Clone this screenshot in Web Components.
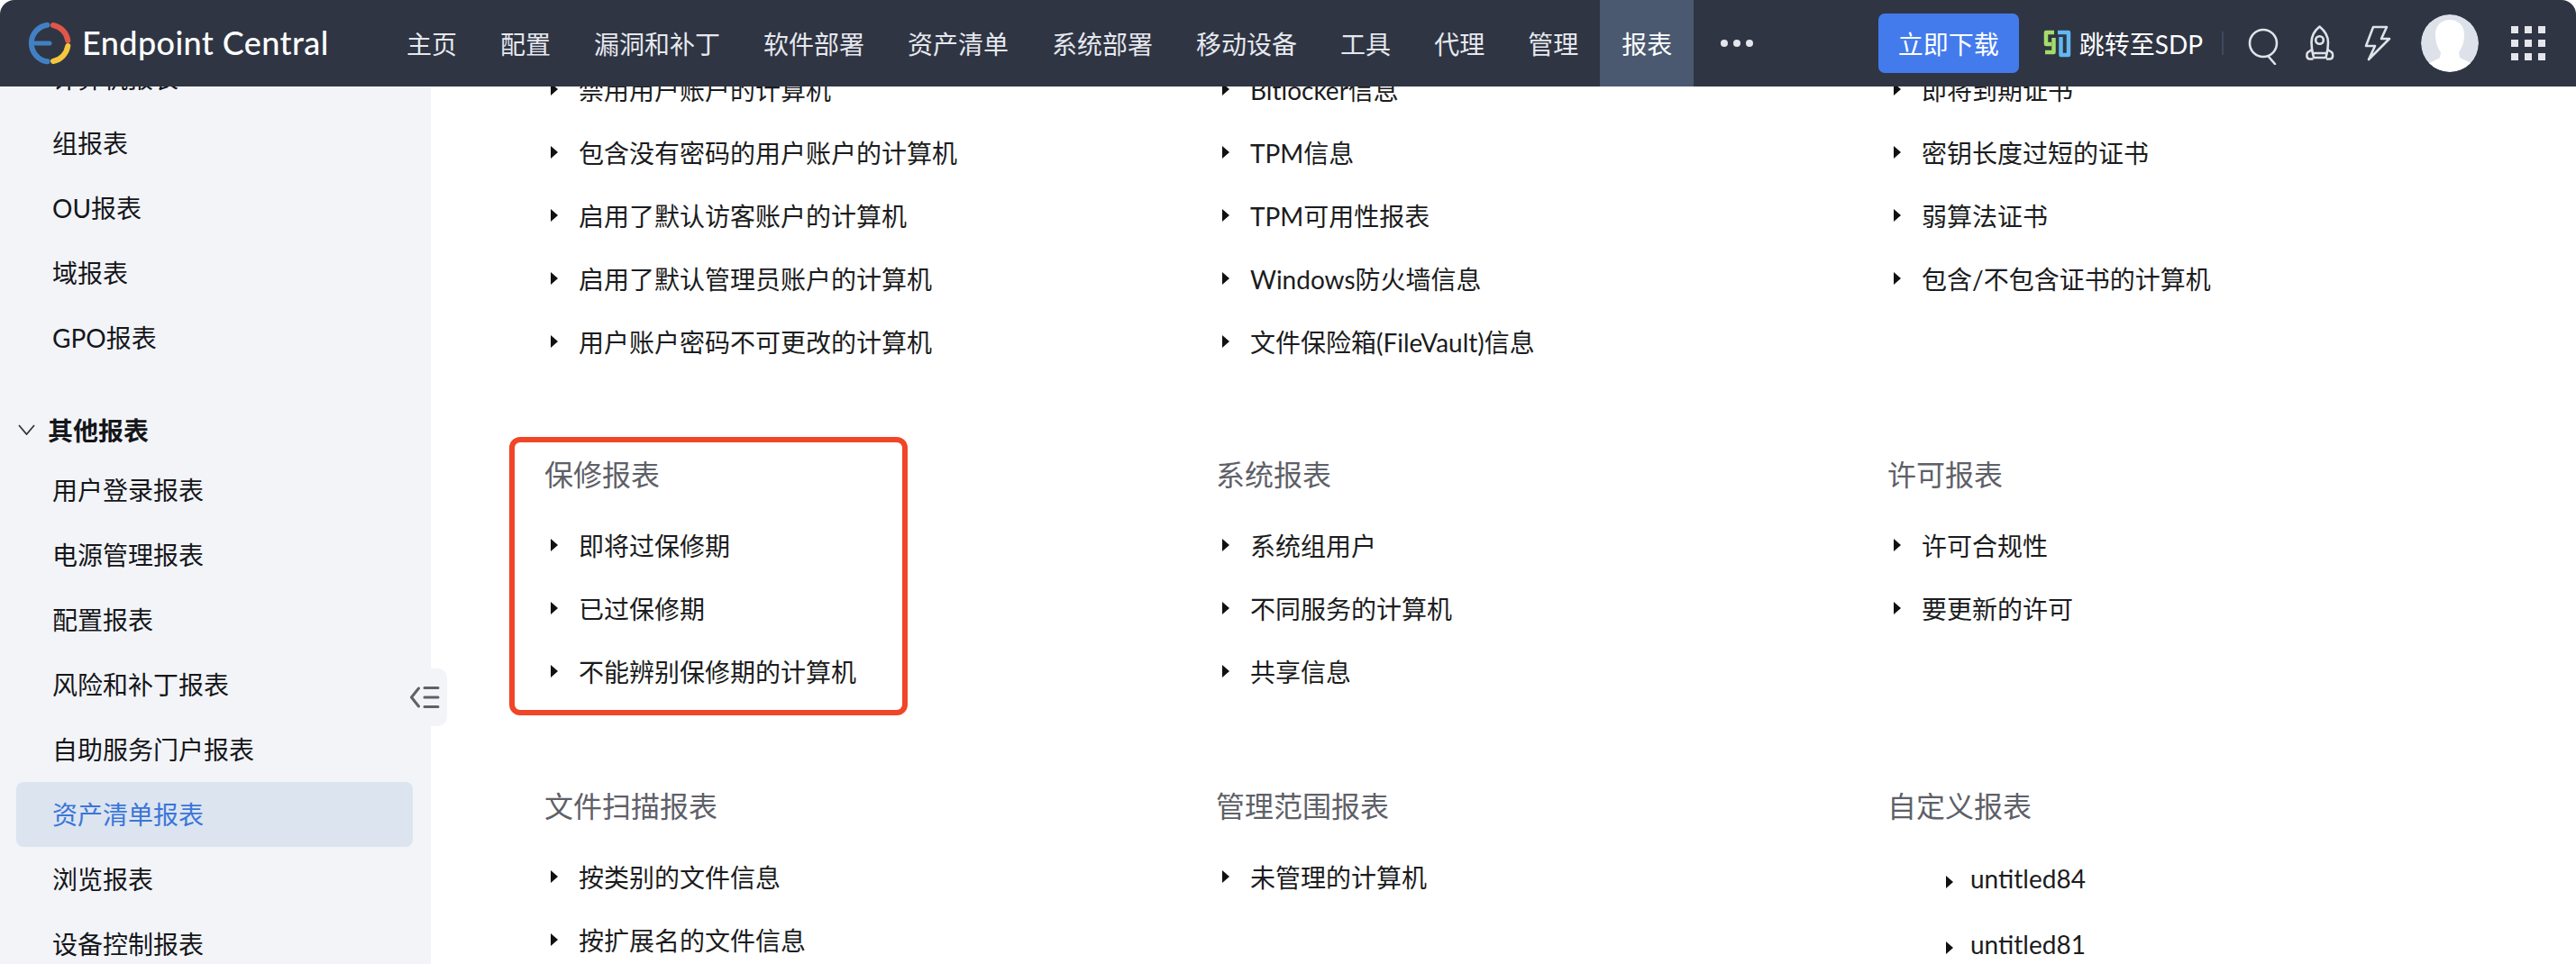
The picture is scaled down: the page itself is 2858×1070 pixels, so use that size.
<!DOCTYPE html>
<html lang="zh">
<head>
<meta charset="utf-8">
<title>Endpoint Central</title>
<style>
  html, body { margin: 0; height: 100%; background: #fff; overflow: hidden; }
  body { font-family: Lato, "Noto Sans CJK SC", sans-serif; font-size: 28px; }
</style>
</head>
<body>
<ec-app>
  <ec-header slot="header">
    <ec-nav-item>主页</ec-nav-item>
    <ec-nav-item>配置</ec-nav-item>
    <ec-nav-item>漏洞和补丁</ec-nav-item>
    <ec-nav-item>软件部署</ec-nav-item>
    <ec-nav-item>资产清单</ec-nav-item>
    <ec-nav-item>系统部署</ec-nav-item>
    <ec-nav-item>移动设备</ec-nav-item>
    <ec-nav-item>工具</ec-nav-item>
    <ec-nav-item>代理</ec-nav-item>
    <ec-nav-item>管理</ec-nav-item>
    <ec-nav-item active>报表</ec-nav-item>
  </ec-header>

  <ec-sidebar slot="sidebar">
    <ec-side-item>计算机报表</ec-side-item>
    <ec-side-item>组报表</ec-side-item>
    <ec-side-item>OU报表</ec-side-item>
    <ec-side-item>域报表</ec-side-item>
    <ec-side-item>GPO报表</ec-side-item>
    <ec-side-group>其他报表</ec-side-group>
    <ec-side-item>用户登录报表</ec-side-item>
    <ec-side-item>电源管理报表</ec-side-item>
    <ec-side-item>配置报表</ec-side-item>
    <ec-side-item>风险和补丁报表</ec-side-item>
    <ec-side-item>自助服务门户报表</ec-side-item>
    <ec-side-item active>资产清单报表</ec-side-item>
    <ec-side-item>浏览报表</ec-side-item>
    <ec-side-item>设备控制报表</ec-side-item>
  </ec-sidebar>

  <ec-report-grid slot="main">
    <ec-report-section>
      <ec-report-link>禁用用户账户的计算机</ec-report-link>
      <ec-report-link>包含没有密码的用户账户的计算机</ec-report-link>
      <ec-report-link>启用了默认访客账户的计算机</ec-report-link>
      <ec-report-link>启用了默认管理员账户的计算机</ec-report-link>
      <ec-report-link>用户账户密码不可更改的计算机</ec-report-link>
    </ec-report-section>
    <ec-report-section>
      <ec-report-link>Bitlocker信息</ec-report-link>
      <ec-report-link>TPM信息</ec-report-link>
      <ec-report-link>TPM可用性报表</ec-report-link>
      <ec-report-link>Windows防火墙信息</ec-report-link>
      <ec-report-link>文件保险箱(FileVault)信息</ec-report-link>
    </ec-report-section>
    <ec-report-section>
      <ec-report-link>即将到期证书</ec-report-link>
      <ec-report-link>密钥长度过短的证书</ec-report-link>
      <ec-report-link>弱算法证书</ec-report-link>
      <ec-report-link>包含/不包含证书的计算机</ec-report-link>
    </ec-report-section>

    <ec-report-section heading="保修报表" marked>
      <ec-report-link>即将过保修期</ec-report-link>
      <ec-report-link>已过保修期</ec-report-link>
      <ec-report-link>不能辨别保修期的计算机</ec-report-link>
    </ec-report-section>
    <ec-report-section heading="系统报表">
      <ec-report-link>系统组用户</ec-report-link>
      <ec-report-link>不同服务的计算机</ec-report-link>
      <ec-report-link>共享信息</ec-report-link>
    </ec-report-section>
    <ec-report-section heading="许可报表">
      <ec-report-link>许可合规性</ec-report-link>
      <ec-report-link>要更新的许可</ec-report-link>
    </ec-report-section>

    <ec-report-section heading="文件扫描报表">
      <ec-report-link>按类别的文件信息</ec-report-link>
      <ec-report-link>按扩展名的文件信息</ec-report-link>
    </ec-report-section>
    <ec-report-section heading="管理范围报表">
      <ec-report-link>未管理的计算机</ec-report-link>
    </ec-report-section>
    <ec-report-section heading="自定义报表">
      <ec-report-link nested>untitled84</ec-report-link>
      <ec-report-link nested>untitled81</ec-report-link>
    </ec-report-section>
  </ec-report-grid>
</ec-app>

<script>
// shadow root helper, every element below uses it
function shadow(el, html) {
  el.attachShadow({ mode: 'open' }).innerHTML = html;
}

class EcApp extends HTMLElement {
  connectedCallback() {
    shadow(this, `
      <style>
        :host { display: flex; flex-direction: column; height: 100vh; }
        .body { position: relative; flex: 1; min-height: 0; display: flex; overflow: hidden; }
        .toggle {
          position: absolute; left: 450px; top: 646px; width: 46px; height: 64px;
          background: #f2f4f8; border-radius: 0 10px 10px 0;
        }
        .toggle svg { display: block; }
      </style>
      <slot name="header"></slot>
      <div class="body">
        <slot name="sidebar"></slot>
        <slot name="main"></slot>
        <div class="toggle">
          <svg width="46" height="64" viewBox="0 0 46 64" fill="none" stroke="#5f6168" stroke-width="3" stroke-linecap="round" stroke-linejoin="round">
            <path d="M14.500 22L6.500 32L14.500 42"/>
            <path d="M21 21.500H36M21 32H36M21 42.500H36"/>
          </svg>
        </div>
      </div>`);
  }
}

class EcHeader extends HTMLElement {
  connectedCallback() {
    shadow(this, `
      <style>
        :host {
          display: flex; align-items: stretch; flex: none; height: 96px;
          background: #2f3543; border-radius: 16px 16px 0 0; color: #fff;
        }
        .brand { display: flex; align-items: center; width: 427px; flex: none; }
        .brand svg { margin-left: 28px; flex: none; }
        .brand span { margin: 0 0 2px 9px; font-size: 36px; font-weight: 500; white-space: nowrap; letter-spacing: .4px; }
        nav { display: flex; align-items: stretch; }
        .more { display: flex; align-items: center; gap: 6px; margin-left: 30px; }
        .more i { width: 8px; height: 8px; border-radius: 50%; background: #e4e6ec; }
        .tools { margin-left: auto; display: flex; align-items: center; padding-right: 34px; }
        .download {
          width: 156px; height: 66px; display: flex; align-items: center; justify-content: center;
          background: #437bed; border-radius: 7px; margin-right: 19px;
        }
        .sdp { display: flex; align-items: center; white-space: nowrap; }
        .sep { width: 2px; height: 26px; background: #3f4a5f; margin: 0 20px 0 21px; }
        svg { display: block; flex: none; }
        .rocket { margin-left: 21px; }
        .bolt { margin-left: 31px; }
        .avatar { margin-left: 33px; width: 64px; height: 64px; border-radius: 50%; }
        .apps {
          margin-left: 36px; display: grid; grid-template-columns: repeat(3, 8px);
          grid-auto-rows: 8px; gap: 7px;
        }
        .apps i { background: #e4e6ec; }
      </style>
      <div class="brand">
        <svg width="54" height="54" viewBox="27 21 54 54" fill="none" stroke-width="6" stroke-linecap="round">
          <path stroke="#4280c4" d="M51.500 27.700A20.500 20.500 0 0 0 51.500 68.300"/>
          <path stroke="#4280c4" stroke-width="5" d="M38 48H54"/>
          <path stroke="#e0574a" d="M58 28A20.500 20.500 0 0 1 74.300 45"/>
          <path stroke="#f6c63d" d="M74.300 51A20.500 20.500 0 0 1 58 68"/>
        </svg>
        <span>Endpoint Central</span>
      </div>
      <nav>
        <slot></slot>
        <div class="more"><i></i><i></i><i></i></div>
      </nav>
      <div class="tools">
        <div class="download">立即下载</div>
        <div class="sdp">
          <svg width="48" height="48" viewBox="0 0 48 48" fill="none" stroke-width="4.500" stroke-linejoin="round">
            <path stroke="#a4dc6a" d="M20 12H11V25H17"/>
            <path stroke="#a4dc6a" d="M19.500 18V34H10"/>
            <path stroke="#62b8f0" d="M24 12H36V37H27.500V17"/>
          </svg>
          <span>跳转至SDP</span>
        </div>
        <div class="sep"></div>
        <svg width="48" height="48" viewBox="0 0 48 48" fill="none" stroke="#dfe2e9" stroke-width="2.600" stroke-linecap="round">
          <circle cx="24" cy="24" r="15"/>
          <path d="M30 39L37 47"/>
        </svg>
        <svg class="rocket" width="36" height="44" viewBox="5 5 36 44" fill="none" stroke="#dfe2e9" stroke-width="2.600" stroke-linejoin="round">
          <path d="M22.500 8.500C17 13 13.500 19 13.500 26C13.500 31 14.500 38 16 43H29.500C31 38 32 31 32 26C32 19 28 13 22.500 8.500Z"/>
          <circle cx="22.500" cy="23.500" r="4.300"/>
          <path d="M15 33.500L9.500 37C7.500 39 8 44 11 44.500H15.500M30.500 33.500L36 37C38 39 37.500 44 34.500 44.500H30M15.500 38H30"/>
        </svg>
        <svg class="bolt" width="30" height="44" viewBox="73 6 30 44" fill="none" stroke="#dfe2e9" stroke-width="2.600" stroke-linejoin="round" stroke-linecap="round">
          <path d="M83 10H98L92 23H101L78 46L85 31H75Z"/>
        </svg>
        <svg class="avatar" viewBox="0 0 64 64">
          <circle cx="32" cy="32" r="32" fill="#dde1ea"/>
          <path fill="#fff" d="M32 6C41 6 48 12 48 22C48 32 45 38 42 42L43 48C47 50 52 52 55 54A32 32 0 0 1 9 54C13 52 18 50 21 48L22 42C19 38 16 32 16 22C16 12 23 6 32 6Z"/>
        </svg>
        <div class="apps"><i></i><i></i><i></i><i></i><i></i><i></i><i></i><i></i><i></i></div>
      </div>`);
  }
}

class EcNavItem extends HTMLElement {
  connectedCallback() {
    shadow(this, `
      <style>
        :host {
          display: inline-flex; align-items: center; height: 100%; padding: 0 24px;
          color: #e6e8ee; white-space: nowrap; vertical-align: top;
        }
        :host([active]) { background: #4a5970; color: #fff; }
      </style>
      <slot></slot>`);
  }
}

class EcSidebar extends HTMLElement {
  connectedCallback() {
    shadow(this, `
      <style>
        :host { display: block; flex: none; width: 478px; background: #f2f4f8; overflow: hidden; }
        .list { margin-top: -45px; }
      </style>
      <div class="list"><slot></slot></div>`);
  }
}

class EcSideItem extends HTMLElement {
  connectedCallback() {
    shadow(this, `
      <style>
        :host {
          display: flex; align-items: center; height: 72px; box-sizing: border-box; margin: 0 20px 0 18px;
          padding: 0 0 3px 40px; border-radius: 8px; color: #15161a; white-space: nowrap;
        }
        :host([active]) { background: #dce4f0; color: #3a76d8; }
      </style>
      <slot></slot>`);
  }
}

class EcSideGroup extends HTMLElement {
  connectedCallback() {
    shadow(this, `
      <style>
        :host {
          display: flex; align-items: center; height: 62px; margin-top: 35px;
          color: #15161a; font-weight: 700; white-space: nowrap;
        }
        svg { margin: 0 14px 0 20px; flex: none; }
      </style>
      <svg width="19" height="12" viewBox="0 0 19 12" fill="none" stroke="#33353b" stroke-width="1.800">
        <path d="M1 1L9.500 11L18 1"/>
      </svg>
      <slot></slot>`);
  }
}

class EcReportGrid extends HTMLElement {
  connectedCallback() {
    shadow(this, `
      <style>
        :host { display: block; flex: 1; min-width: 0; overflow: hidden; }
        .grid {
          display: grid; grid-template-columns: repeat(3, 745px); row-gap: 90px;
          margin: -31px 0 0 87px; align-items: start;
        }
        ::slotted(ec-report-section[heading="文件扫描报表"]),
        ::slotted(ec-report-section[heading="管理范围报表"]),
        ::slotted(ec-report-section[heading="自定义报表"]) { margin-top: 2px; }
      </style>
      <div class="grid"><slot></slot></div>`);
  }
}

class EcReportSection extends HTMLElement {
  connectedCallback() {
    const heading = this.getAttribute('heading');
    shadow(this, `
      <style>
        :host { display: block; position: relative; width: 442px; padding-left: 40px; box-sizing: border-box; }
        h3 { margin: 0 0 22px -1px; font-size: 32px; font-weight: 400; line-height: 44px; color: #5e6068; white-space: nowrap; }
        .mark {
          position: absolute; left: 0; top: -20px; right: 0; bottom: -13px;
          border: 6px solid #f04527; border-radius: 12px;
        }
      </style>
      ${heading ? `<h3>${heading}</h3>` : ''}
      <slot></slot>
      ${this.hasAttribute('marked') ? '<div class="mark"></div>' : ''}`);
  }
}

class EcReportLink extends HTMLElement {
  connectedCallback() {
    shadow(this, `
      <style>
        :host {
          display: flex; align-items: center; height: 70px; box-sizing: border-box; padding-bottom: 2px;
          color: #1b1c20; white-space: nowrap;
        }
        i {
          flex: none; width: 0; height: 0; margin: 0 23px 0 6px;
          border-left: 8px solid #111; border-top: 7px solid transparent; border-bottom: 7px solid transparent;
        }
        :host([nested]) { height: 73px; }
        :host([nested]) i { margin: 8px 19px 0 64px; }
      </style>
      <i></i><slot></slot>`);
  }
}

customElements.define('ec-app', EcApp);
customElements.define('ec-header', EcHeader);
customElements.define('ec-nav-item', EcNavItem);
customElements.define('ec-sidebar', EcSidebar);
customElements.define('ec-side-item', EcSideItem);
customElements.define('ec-side-group', EcSideGroup);
customElements.define('ec-report-grid', EcReportGrid);
customElements.define('ec-report-section', EcReportSection);
customElements.define('ec-report-link', EcReportLink);
</script>
</body>
</html>
